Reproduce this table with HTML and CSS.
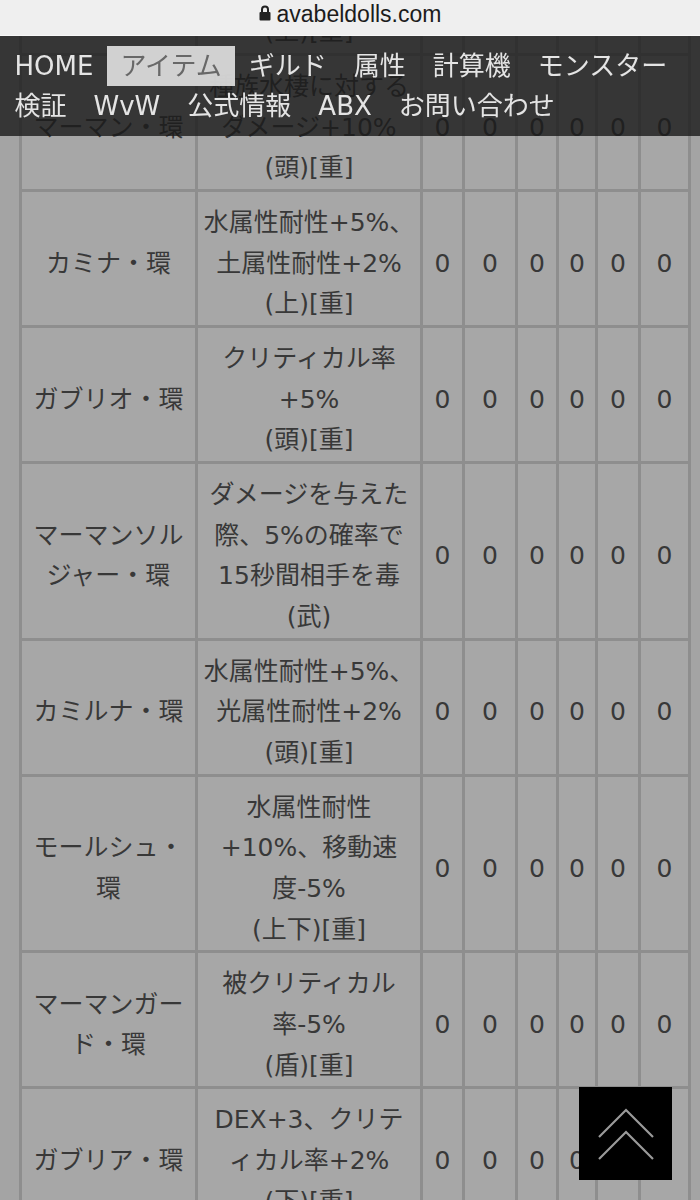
FILE: index.html
```html
<!DOCTYPE html>
<html lang="ja">
<head>
<meta charset="utf-8">
<title>アイテム</title>
<link rel="stylesheet" href="styles.css">
</head>
<body>
<div class="urlbar">
  <svg class="lock" width="12" height="16" viewBox="0 0 12 16"><path d="M3 7V4.5a3 3 0 0 1 6 0V7" fill="none" stroke="#222" stroke-width="2"/><rect x="0.5" y="7" width="11" height="8.5" rx="1" fill="#222"/></svg>
  <span class="host">avabeldolls.com</span>
</div>
<nav class="menu">
  <a class="item">HOME</a><a class="item active">アイテム</a><a class="item">ギルド</a><a class="item">属性</a><a class="item">計算機</a><a class="item">モンスター</a><a class="item">検証</a><a class="item">WvW</a><a class="item">公式情報</a><a class="item">ABX</a><a class="item">お問い合わせ</a>
</nav>

<table class="items">
  <colgroup>
    <col class="c-name"><col class="c-desc"><col class="c-a"><col class="c-b"><col class="c-c"><col class="c-d"><col class="c-e"><col class="c-f">
  </colgroup>
  <tbody>
    <tr><td>マーマンシャー<br>マン・環</td><td>水属性耐性+5%、<br>闇属性耐性+2%<br>(上)[重]</td><td>0</td><td>0</td><td>0</td><td>0</td><td>0</td><td>0</td></tr>
    <tr><td>マーマン・環</td><td>種族水棲に対する<br>ダメージ+10%<br>(頭)[重]</td><td>0</td><td>0</td><td>0</td><td>0</td><td>0</td><td>0</td></tr>
    <tr><td>カミナ・環</td><td>水属性耐性+5%、<br>土属性耐性+2%<br>(上)[重]</td><td>0</td><td>0</td><td>0</td><td>0</td><td>0</td><td>0</td></tr>
    <tr><td>ガブリオ・環</td><td>クリティカル率<br>+5%<br>(頭)[重]</td><td>0</td><td>0</td><td>0</td><td>0</td><td>0</td><td>0</td></tr>
    <tr><td>マーマンソル<br>ジャー・環</td><td>ダメージを与えた<br>際、5%の確率で<br>15秒間相手を毒<br>(武)</td><td>0</td><td>0</td><td>0</td><td>0</td><td>0</td><td>0</td></tr>
    <tr><td>カミルナ・環</td><td>水属性耐性+5%、<br>光属性耐性+2%<br>(頭)[重]</td><td>0</td><td>0</td><td>0</td><td>0</td><td>0</td><td>0</td></tr>
    <tr><td>モールシュ・<br>環</td><td>水属性耐性<br>+10%、移動速<br>度-5%<br>(上下)[重]</td><td>0</td><td>0</td><td>0</td><td>0</td><td>0</td><td>0</td></tr>
    <tr><td>マーマンガー<br>ド・環</td><td>被クリティカル<br>率-5%<br>(盾)[重]</td><td>0</td><td>0</td><td>0</td><td>0</td><td>0</td><td>0</td></tr>
    <tr><td>ガブリア・環</td><td>DEX+3、クリテ<br>ィカル率+2%<br>(下)[重]</td><td>0</td><td>0</td><td>0</td><td>0</td><td>0</td><td>0</td></tr>
  </tbody>
</table>

<a class="totop" aria-label="ページトップへ">
  <svg width="93" height="93" viewBox="0 0 93 93"><path d="M20 50 L47 23 L74 50 M20 72 L47 45 L74 72" fill="none" stroke="#9a9a9a" stroke-width="2.2"/></svg>
</a>
</body>
</html>
```
FILE: styles.css
```css
html, body {
  margin: 0;
  padding: 0;
}
body {
  background: #a4a4a4;
  font-family: "DejaVu Sans", "Noto Sans CJK JP", sans-serif;
  color: #383838;
  overflow: hidden;
}

.urlbar {
  position: fixed;
  top: 0;
  left: 0;
  right: 0;
  height: 35px;
  background: #efefef;
  border-bottom: 1px solid #f8f8f8;
  display: flex;
  justify-content: center;
  align-items: flex-start;
  gap: 6px;
  z-index: 3;
}
.lock {
  margin-top: 5px;
}
.host {
  font-family: "Liberation Sans", "Noto Sans CJK JP", sans-serif;
  font-size: 23px;
  line-height: 28px;
  color: #1c1c1c;
}

.menu {
  position: fixed;
  top: 36px;
  left: 0;
  right: 0;
  height: 80px;
  padding: 10px 0 10px 1px;
  background: rgba(26, 26, 26, 0.8);
  display: flex;
  flex-wrap: wrap;
  align-content: flex-start;
  z-index: 2;
}
.item {
  font-family: "DejaVu Sans", "Noto Sans CJK JP", sans-serif;
  font-size: 26px;
  line-height: 40px;
  height: 40px;
  padding: 0 13.5px;
  color: #e4e4e4;
  white-space: nowrap;
}
.item.active {
  background: rgba(226, 226, 226, 0.9);
  color: #686868;
}

.items {
  table-layout: fixed;
  width: 672px;
  margin: -83px 0 0 19px;
  border-collapse: separate;
  border-spacing: 3px;
  background: #8e8e8e;
}
.c-name { width: 173px; }
.c-desc { width: 222px; }
.c-a { width: 39px; }
.c-b { width: 50px; }
.c-c { width: 38px; }
.c-d { width: 36px; }
.c-e { width: 40px; }
.c-f { width: 47px; }

.items td {
  background: #a7a7a7;
  font-size: 25px;
  line-height: 40.67px;
  padding: 11px 0 0;
  text-align: center;
  vertical-align: middle;
  white-space: nowrap;
  overflow: hidden;
}

.totop {
  position: fixed;
  right: 28px;
  bottom: 20px;
  width: 93px;
  height: 93px;
  background: #000;
  display: block;
  z-index: 4;
}
.totop svg {
  display: block;
}
```
